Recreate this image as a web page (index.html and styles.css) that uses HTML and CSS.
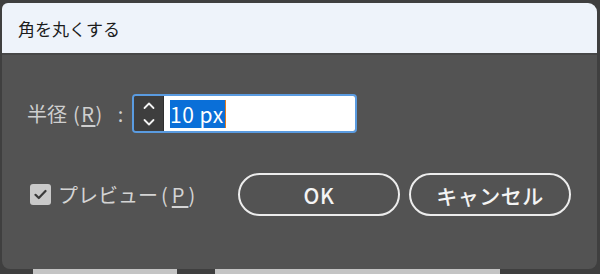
FILE: index.html
```html
<!DOCTYPE html>
<html lang="ja">
<head>
    <meta charset="UTF-8">
    <meta name="viewport" content="width=device-width, initial-scale=1.0">
    <title>角を丸くする</title>
    <link rel="stylesheet" href="styles.css">
</head>
<body>
    <div class="dialog">
        <div class="titlebar">角を丸くする</div>

        <div class="content">
            <div class="row radius-row">
                <label class="field-label" for="radius">半径<span class="key">(<u>R</u>)</span><span class="colon">:</span></label>
                <div class="spin-field">
                    <div class="spinner">
                        <svg width="14" height="30" viewBox="0 0 14 30">
                            <path d="M2.5 9 L7 4.5 L11.5 9" fill="none" stroke="#f2f2f2" stroke-width="1.8" stroke-linecap="round" stroke-linejoin="round"/>
                            <path d="M2.5 21 L7 25.5 L11.5 21" fill="none" stroke="#f2f2f2" stroke-width="1.8" stroke-linecap="round" stroke-linejoin="round"/>
                        </svg>
                    </div>
                    <div class="value-box" id="radius"><span class="selected">10 px</span></div>
                </div>
            </div>

            <div class="row action-row">
                <label class="preview">
                    <span class="checkbox">
                        <svg width="13" height="11" viewBox="0 0 13 11">
                            <path d="M1.5 5.8 L4.8 9 L11.5 2" fill="none" stroke="#3a3a3a" stroke-width="2.2" stroke-linecap="round" stroke-linejoin="round"/>
                        </svg>
                    </span>
                    プレビュー<span class="key">(<u>P</u>)</span>
                </label>
                <button class="btn btn-ok">OK</button>
                <button class="btn">キャンセル</button>
            </div>
        </div>
    </div>

    <div class="bottom-strip">
        <span class="strip-a"></span>
        <span class="strip-b"></span>
    </div>
</body>
</html>
```

FILE: styles.css
```css
body {
    margin: 0;
    width: 600px;
    height: 274px;
    overflow: hidden;
    background-color: #3f3f3f;
    font-family: "Noto Sans CJK JP", "Noto Sans", sans-serif;
}

.dialog {
    margin: 3px 3px 0 2px;
    height: 266px;
    background-color: #535353;
    border-radius: 6px 9px 8px 8px;
    overflow: hidden;
}

.titlebar {
    height: 50px;
    display: flex;
    align-items: center;
    padding-left: 16px;
    background-color: #eef3fa;
    border-bottom: 2px solid #474747;
    color: #1c1c1c;
    font-size: 17px;
}

.content {
    padding: 39px 0 0 25px;
}

.row {
    display: flex;
    align-items: center;
}

.field-label {
    width: 105px;
    color: #cfcfcf;
    font-size: 20px;
}

.key {
    margin-left: 6px;
    letter-spacing: 1.5px;
}

.colon {
    margin-left: 14px;
}

u {
    text-underline-offset: 3px;
}

.spin-field {
    display: flex;
    width: 225px;
    height: 39px;
    box-sizing: border-box;
    border: 2px solid #5a9be0;
    border-radius: 4px;
    overflow: hidden;
}

.spinner {
    width: 29px;
    display: flex;
    align-items: center;
    justify-content: center;
    background-color: #3e3e3e;
    border-right: 1px solid #2e2e2e;
}

.value-box {
    flex: 1;
    display: flex;
    align-items: center;
    padding-left: 6px;
    background-color: #ffffff;
}

.selected {
    background-color: #0a6fd8;
    color: #ffffff;
    font-size: 21px;
    line-height: 28px;
    letter-spacing: 0.5px;
    padding-right: 1px;
    border-right: 1px solid #e07a1f;
}

.action-row {
    margin-top: 40px;
}

.preview {
    display: flex;
    align-items: center;
    width: 211px;
    color: #d4d4d4;
    font-size: 20px;
}

.preview .key {
    margin-left: 3px;
    letter-spacing: 4px;
}

.checkbox {
    width: 21px;
    height: 21px;
    margin: 0 7px 0 3px;
    display: flex;
    align-items: center;
    justify-content: center;
    background-color: #c9c9c9;
    border-radius: 3px;
}

.btn {
    width: 162px;
    height: 43px;
    margin-right: 9px;
    background-color: #535353;
    border: 2px solid #ececec;
    border-radius: 22px;
    color: #f4f4f4;
    font-family: "Noto Sans CJK JP", "Noto Sans", sans-serif;
    font-size: 21px;
    font-weight: 500;
    letter-spacing: 0.5px;
    cursor: pointer;
}

.bottom-strip {
    display: flex;
    height: 5px;
}

.strip-a {
    margin-left: 33px;
    width: 144px;
    background-color: #c4c4c4;
}

.strip-b {
    margin-left: 38px;
    width: 285px;
    background-color: #c4c4c4;
}
```
